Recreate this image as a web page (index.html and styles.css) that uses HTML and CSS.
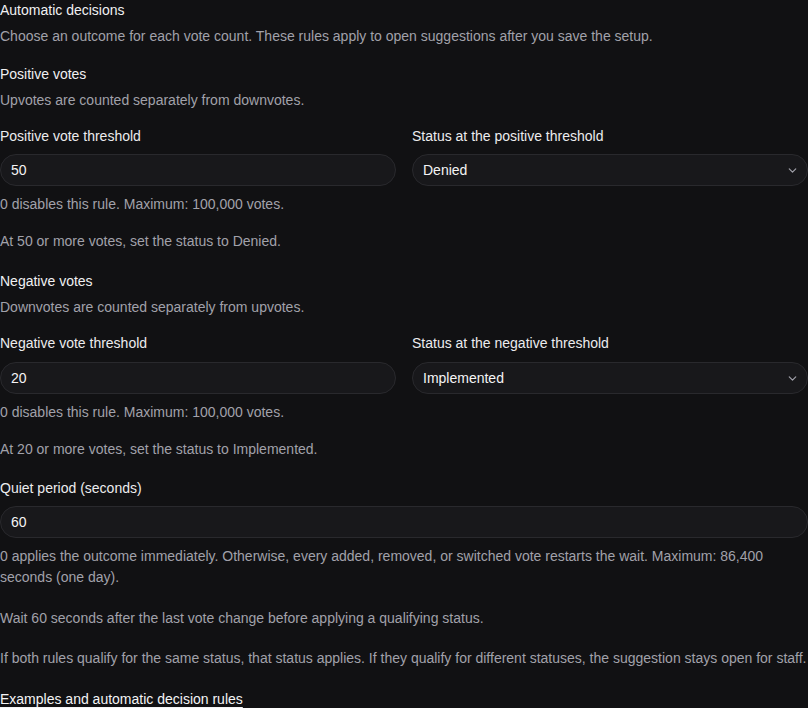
FILE: index.html
```html
<!DOCTYPE html>
<html lang="en">
<head>
<meta charset="utf-8">
<title>Automatic decisions</title>
<link rel="stylesheet" href="styles.css">
</head>
<body>
<main class="page">
  <section class="intro">
    <h2 class="title">Automatic decisions</h2>
    <p class="desc">Choose an outcome for each vote count. These rules apply to open suggestions after you save the setup.</p>
  </section>

  <section class="group">
    <h3 class="title">Positive votes</h3>
    <p class="desc">Upvotes are counted separately from downvotes.</p>
    <div class="grid">
      <div class="field">
        <label class="label">Positive vote threshold</label>
        <div class="input"><span>50</span></div>
        <p class="help">0 disables this rule. Maximum: 100,000 votes.</p>
      </div>
      <div class="field">
        <label class="label">Status at the positive threshold</label>
        <div class="input select"><span>Denied</span>
          <svg class="chev" width="13" height="13" viewBox="0 0 24 24" fill="none" stroke="currentColor" stroke-width="2.2" stroke-linecap="round" stroke-linejoin="round"><path d="M6 9l6 6 6-6"/></svg>
        </div>
      </div>
    </div>
    <p class="summary">At 50 or more votes, set the status to Denied.</p>
  </section>

  <section class="group negative">
    <h3 class="title">Negative votes</h3>
    <p class="desc">Downvotes are counted separately from upvotes.</p>
    <div class="grid">
      <div class="field">
        <label class="label">Negative vote threshold</label>
        <div class="input"><span>20</span></div>
        <p class="help">0 disables this rule. Maximum: 100,000 votes.</p>
      </div>
      <div class="field">
        <label class="label">Status at the negative threshold</label>
        <div class="input select"><span>Implemented</span>
          <svg class="chev" width="13" height="13" viewBox="0 0 24 24" fill="none" stroke="currentColor" stroke-width="2.2" stroke-linecap="round" stroke-linejoin="round"><path d="M6 9l6 6 6-6"/></svg>
        </div>
      </div>
    </div>
    <p class="summary">At 20 or more votes, set the status to Implemented.</p>
  </section>

  <section class="quiet">
    <div class="field">
      <label class="label">Quiet period (seconds)</label>
      <div class="input"><span>60</span></div>
      <p class="help wrap">0 applies the outcome immediately. Otherwise, every added, removed, or switched vote restarts the wait. Maximum: 86,400 seconds (one day).</p>
    </div>
    <p class="summary s2">Wait 60 seconds after the last vote change before applying a qualifying status.</p>
    <p class="summary s3">If both rules qualify for the same status, that status applies. If they qualify for different statuses, the suggestion stays open for staff.</p>
    <a class="link" href="#">Examples and automatic decision rules</a>
  </section>
</main>
</body>
</html>
```

FILE: styles.css
```css
html, body {
  margin: 0;
  padding: 0;
  background: #111113;
}
body {
  font-family: "Liberation Sans", Arial, sans-serif;
  font-size: 14px;
  line-height: 20px;
  color: #ececee;
  width: 808px;
  overflow: hidden;
}
.page {
  display: flex;
  flex-direction: column;
}
.title {
  margin: 0;
  font-size: 14px;
  font-weight: 400;
  line-height: 20px;
  color: #f0f0f2;
}
.desc {
  margin: 6px 0 0;
  color: #a1a1aa;
}
.group {
  margin-top: 18px;
}
.group + .group {
  margin-top: 20px;
}
.grid {
  display: grid;
  grid-template-columns: 1fr 1fr;
  gap: 16px;
  margin-top: 16px;
}
.field {
  display: flex;
  flex-direction: column;
}
.label {
  display: block;
  color: #ececee;
  margin-bottom: 8px;
}
.negative .label {
  margin-bottom: 9px;
}
.input {
  box-sizing: border-box;
  height: 32px;
  border: 1px solid #29292d;
  background: #18181b;
  border-radius: 16px;
  padding: 0 10px;
  display: flex;
  align-items: center;
  justify-content: space-between;
  color: #f4f4f5;
}
.chev {
  color: #a1a1aa;
  margin-right: -2px;
}
.help {
  margin: 8px 0 0;
  color: #a1a1aa;
}
.help.wrap {
  line-height: 21px;
}
.summary {
  margin: 17px 0 0;
  color: #a1a1aa;
}
.quiet {
  margin-top: 19px;
}
.summary.s2 {
  margin-top: 20px;
}
.summary.s3 {
  margin-top: 20px;
}
.link {
  display: inline-block;
  margin-top: 21px;
  color: #f4f4f5;
  text-decoration: underline;
  text-underline-offset: 3px;
  align-self: flex-start;
}
```
